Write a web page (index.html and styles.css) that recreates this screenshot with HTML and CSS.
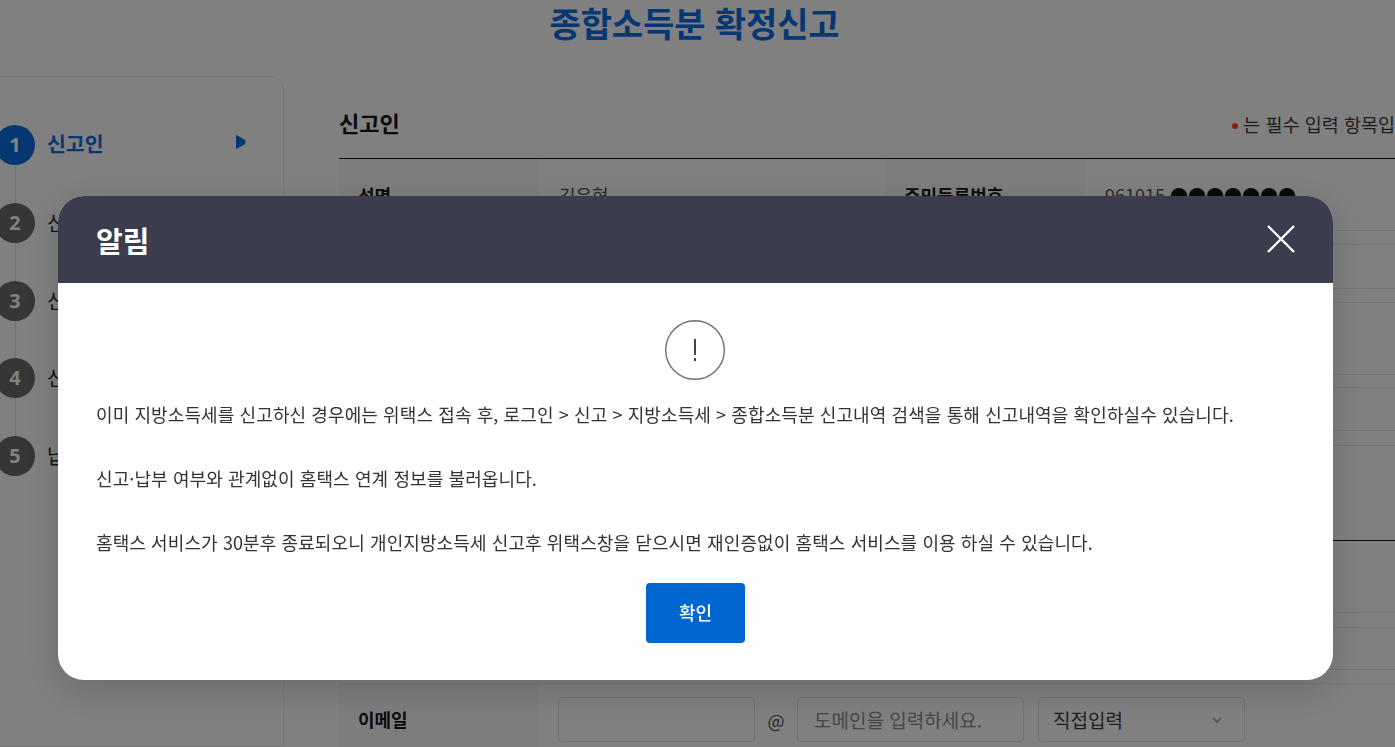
FILE: index.html
```html
<!DOCTYPE html>
<html lang="ko">
<head>
<meta charset="utf-8">
<title>종합소득분 확정신고</title>
<link rel="stylesheet" href="styles.css">
</head>
<body>
<div class="page">
  <h1 class="page-title">종합소득분 확정신고</h1>
  <div class="layout">
    <aside class="side">
      <ol class="steps">
        <li class="step active"><span class="num">1</span><span class="step-label">신고인</span>
          <svg class="step-arrow" width="12" height="16" viewBox="0 0 12 16"><path d="M1.5 1.5 L10 6.5 V9.5 L1.5 14.5 Z" fill="currentColor" stroke="currentColor" stroke-width="1" stroke-linejoin="round"/></svg>
        </li>
        <li class="step"><span class="num">2</span><span class="step-label">신고내역</span></li>
        <li class="step"><span class="num">3</span><span class="step-label">신고서</span></li>
        <li class="step"><span class="num">4</span><span class="step-label">신고확인</span></li>
        <li class="step"><span class="num">5</span><span class="step-label">납부</span></li>
      </ol>
    </aside>
    <main class="main">
      <div class="main-head">
        <h2 class="main-title">신고인</h2>
        <p class="req"><span class="req-dot"></span>는 필수 입력 항목입니다</p>
      </div>
      <div class="form">
        <div class="row r1">
          <div class="th">성명</div><div class="td w346">김은혁</div>
          <div class="th">주민등록번호</div><div class="td">961015 <span class="mask">●●●●●●●</span></div>
        </div>
        <div class="row r2"></div>
        <div class="row r3"></div>
        <div class="row r4"></div>
        <div class="row r5"></div>
        <div class="row r6"></div>
        <div class="row r7"></div>
        <div class="row r8"></div>
        <div class="row r9 dark"></div>
        <div class="row r10"></div>
        <div class="row r11"></div>
        <div class="row r12"></div>
        <div class="row r13"></div>
        <div class="row r14">
          <div class="th">이메일</div>
          <div class="td email">
            <span class="field f-id"></span>
            <span class="at">@</span>
            <span class="field f-domain">도메인을 입력하세요.</span>
            <span class="field f-select">직접입력<svg class="chev" width="10" height="7" viewBox="0 0 10 7"><path d="M1 1 L5 5 L9 1" fill="none" stroke="currentColor" stroke-width="2"/></svg></span>
          </div>
        </div>
      </div>
    </main>
  </div>
</div>

<div class="dim"></div>
<section class="modal">
  <header class="modal-head">
    <h3 class="modal-title">알림</h3>
    <svg class="modal-close" width="28" height="28" viewBox="0 0 28 28"><path d="M1 1 L27 27 M27 1 L1 27" fill="none" stroke="#fff" stroke-width="2.4"/></svg>
  </header>
  <div class="modal-body">
    <div class="alert-icon">
      <svg width="60" height="60" viewBox="0 0 60 60"><circle cx="30" cy="30" r="29.3" fill="none" stroke="#6f6f6f" stroke-width="1.4"/><path d="M30 19 V35" stroke="#444" stroke-width="2" fill="none"/><path d="M30 38 V41" stroke="#444" stroke-width="2" fill="none"/></svg>
    </div>
    <div class="msgs">
      <p class="msg">이미 지방소득세를 신고하신 경우에는 위택스 접속 후, 로그인 &gt; 신고 &gt; 지방소득세 &gt; 종합소득분 신고내역 검색을 통해 신고내역을 확인하실수 있습니다.</p>
      <p class="msg">신고·납부 여부와 관계없이 홈택스 연계 정보를 불러옵니다.</p>
      <p class="msg">홈택스 서비스가 30분후 종료되오니 개인지방소득세 신고후 위택스창을 닫으시면 재인증없이 홈택스 서비스를 이용 하실 수 있습니다.</p>
    </div>
    <button class="ok" type="button">확인</button>
  </div>
</section>
</body>
</html>
```

FILE: styles.css
```css
* { box-sizing: border-box; }
html, body { margin: 0; padding: 0; height: 100%; overflow: hidden; }
body {
  font-family: "Noto Sans CJK KR", "Noto Sans", sans-serif;
  color: #222;
  background: #d5d5d5;
}
h1, h2, h3, p, ol { margin: 0; padding: 0; }

.page { width: 1395px; height: 747px; overflow: hidden; }
.page-title {
  height: 76px;
  padding-right: 6px;
  text-align: center;
  font-size: 34px;
  line-height: 46px;
  letter-spacing: -.1px;
  font-weight: 700;
  color: #0a5cc0;
}
.layout { display: flex; height: 671px; }

.side {
  flex: 0 0 304px;
  margin-left: -20px;
  border: 1px solid #c6c6c6;
  border-radius: 14px 14px 0 0;
  padding-top: 48px;
}
.steps { list-style: none; }
.step {
  position: relative;
  display: flex;
  align-items: center;
  height: 40px;
  margin-bottom: 37.75px;
  padding-left: 14px;
  font-size: 20px;
}
.step:not(:last-child)::after {
  content: "";
  position: absolute;
  left: 34px;
  top: 40px;
  width: 1px;
  height: 38px;
  background: #bbb;
}
.num {
  flex: 0 0 40px;
  width: 40px;
  height: 40px;
  border-radius: 50%;
  background: #5a5a5a;
  color: #d8d8d8;
  font-family: "Noto Sans", sans-serif;
  font-weight: 700;
  font-size: 20px;
  line-height: 40px;
  text-align: center;
}
.step-label { margin-left: 12px; line-height: 40px; height: 40px; color: #222; }
.active .num { background: #0a5cc0; color: #ddd; }
.active .step-label { color: #0a5cc0; font-weight: 700; font-size: 20.5px; line-height: 36px; }
.step-arrow { position: absolute; left: 254px; top: 9px; color: #0a5cc0; }

.main { flex: 0 0 1100px; margin-left: 55px; min-width: 0; }
.main-head {
  display: flex;
  align-items: center;
  justify-content: space-between;
  height: 83px;
  padding-top: 9px;
  border-bottom: 1px solid #111;
}
.main-title { font-size: 22px; font-weight: 700; color: #111; }
.req { display: flex; align-items: center; font-size: 18.5px; color: #333; white-space: nowrap; margin: 4px 10px 0 0; }
.req-dot { width: 6px; height: 6px; border-radius: 50%; background: #f03010; margin-right: 5px; margin-top: 4px; }

.form { display: flex; flex-direction: column; }
.row { display: flex; border-bottom: 1px solid #c4c4c4; }
.row.dark { border-bottom-color: #111; }
.r1 { height: 72px; }
.r2 { height: 14px; }
.r3 { height: 44px; }
.r4 { height: 14px; }
.r5 { height: 72px; }
.r6 { height: 13px; }
.r7 { height: 43px; }
.r8 { height: 15px; }
.r9 { height: 95px; }
.r10 { height: 72px; }
.r11 { height: 15px; }
.r12 { height: 42px; }
.r13 { height: 14px; }
.r14 { height: 71px; border-bottom: 0; }
.r14 .th { padding-bottom: 2px; }

.th {
  flex: 0 0 200px;
  display: flex;
  align-items: center;
  padding-left: 19px;
  background: #d0d0d0;
  font-size: 18px;
  font-weight: 700;
  color: #111;
}
.td {
  flex: 0 0 auto;
  display: flex;
  align-items: center;
  padding-left: 20px;
  font-size: 18px;
  color: #444;
  white-space: pre;
}
.w346 { width: 346px; }
.mask { color: #111; font-size: 18px; }
.email { padding-left: 19px; }
.field {
  display: flex;
  align-items: center;
  height: 45px;
  border: 1px solid #bdbdbd;
  border-radius: 4px;
  font-size: 19px;
}
.f-id { width: 197px; }
.at { width: 42px; text-align: center; color: #444; font-size: 18px; }
.f-domain { width: 227px; padding-left: 16px; color: #777; }
.f-select {
  position: relative;
  width: 207px;
  margin-left: 14px;
  padding-left: 14px;
  color: #333;
}
.chev { position: absolute; right: 22px; top: 19px; color: #999; }

.dim { position: fixed; inset: 0; background: rgba(0, 0, 0, .4); }
.modal {
  position: fixed;
  left: 58px;
  top: 196px;
  width: 1275px;
  height: 484px;
  border-radius: 26px;
  background: #fff;
  overflow: hidden;
  box-shadow: 0 10px 36px rgba(0, 0, 0, .16);
}
.modal-head {
  position: relative;
  height: 87px;
  padding: 22px 38px 0;
  background: #3b3c4d;
  color: #fff;
}
.modal-title { font-size: 29px; line-height: 44px; font-weight: 700; }
.modal-close { position: absolute; left: 1209px; top: 29px; }
.modal-body { padding: 37px 38px 0 37px; }
.alert-icon { height: 60px; }
.alert-icon svg { display: block; margin: 0 auto; }
.msgs { display: flex; flex-direction: column; gap: 32px; margin: 18px 0 25px 1px; }
.msg {
  font-size: 18px;
  line-height: 32px;
  letter-spacing: .1px;
  color: #333;
  white-space: nowrap;
}
.ok {
  display: block;
  width: 99px;
  height: 60px;
  margin: 0 0 0 551px;
  padding: 0 0 2px;
  border: 0;
  border-radius: 4px;
  background: #0066d0;
  color: #fff;
  font-family: inherit;
  font-size: 18px;
  font-weight: 500;
}
```
